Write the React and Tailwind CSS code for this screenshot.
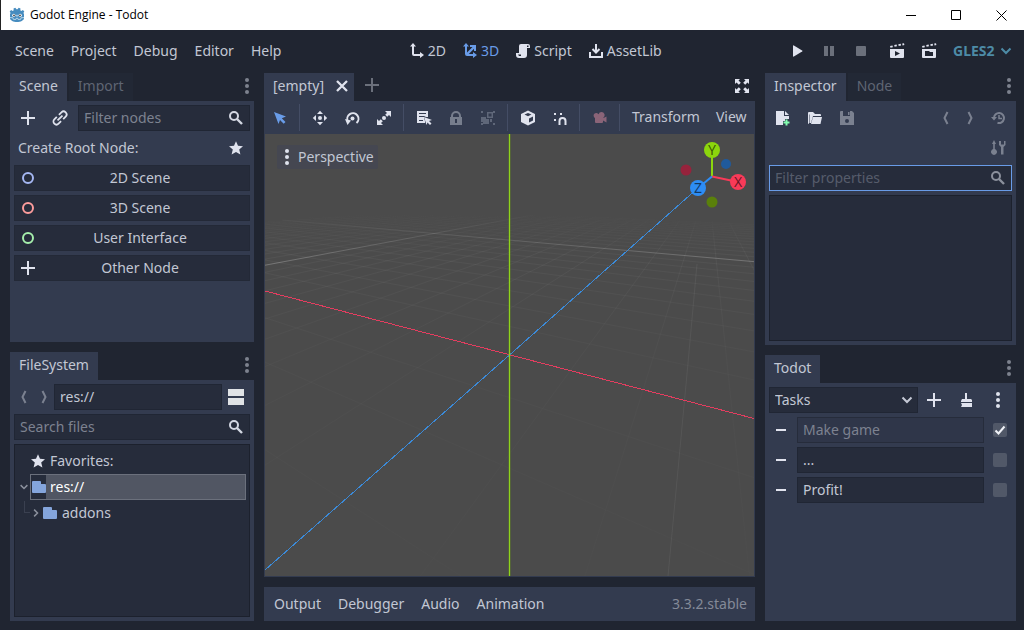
import React from "react";

const Icon = ({ children, className = "", size = 16 }) => (
  <svg
    width={size}
    height={size}
    viewBox="0 0 16 16"
    fill="currentColor"
    aria-hidden="true"
    className={`shrink-0 ${className}`}
  >
    {children}
  </svg>
);

const stroke = { fill: "none", stroke: "currentColor", strokeWidth: 2 };

const icons = {
  add: <path d="M7 1v6H1v2h6v6h2V9h6V7H9V1z" />,
  link: (
    <g {...stroke} strokeWidth="1.800" transform="rotate(-45 8 8)">
      <path d="M6.500 5H3a3 3 0 0 0 0 6h3.500M9.500 5H13a3 3 0 0 1 0 6H9.500" />
      <path d="M4.500 8h7" />
    </g>
  ),
  search: (
    <g {...stroke}>
      <circle cx="6" cy="6" r="4" />
      <path d="M9 9l5 5" strokeWidth="2.400" />
    </g>
  ),
  star: <path d="M8 1.200l2 4.600 5 .5-3.800 3.300 1.200 5L8 12l-4.400 2.600 1.200-5L1 6.300l5-.5z" />,
  ring: <circle cx="8" cy="8" r="5" {...stroke} />,
  dots: (
    <>
      <circle cx="8" cy="2" r="2" />
      <circle cx="8" cy="8" r="2" />
      <circle cx="8" cy="14" r="2" />
    </>
  ),
  back: <path d="M9.500 2L6.500 8l3 6" {...stroke} />,
  forward: <path d="M6.500 2l3 6-3 6" {...stroke} />,
  split: <path d="M0 0h16v7H0zM0 9h16v7H0z" />,
  folder: <path d="M2 2a1 1 0 0 0-1 1v10a1 1 0 0 0 1 1h12a1 1 0 0 0 1-1V6a1 1 0 0 0-1-1h-4V3a1 1 0 0 0-1-1z" />,
  down: <path d="M3.500 5.500L8 10l4.500-4.500" {...stroke} />,
  right: <path d="M5.500 3.500L10 8l-4.500 4.500" {...stroke} />,
  close: <path d="M3 3l10 10M13 3L3 13" {...stroke} strokeWidth="2.300" />,
  expand: (
    <path d="M1 1h5L4.500 2.500l2.300 2.300-2 2-2.300-2.300L1 6zM15 1v5l-1.500-1.500-2.300 2.300-2-2 2.300-2.300L10 1zM1 15v-5l1.500 1.500 2.300-2.300 2 2-2.300 2.300L6 15zM15 15h-5l1.500-1.500-2.300-2.300 2-2 2.300 2.300L15 10z" />
  ),
  mode2d: <path d="M4 0L1 3.500h2V11a2 2 0 0 0 2 2h6v2l4-3-4-3v2H5V3.500h2z" />,
  mode3d: (
    <path d="M4 0L1 3.500h2V11a2 2 0 0 0 2 2h6v2l4-3-4-3v2H6.800L12 5.700V8h2V2H8v2h2.500L5 9.500v-6h2z" />
  ),
  script: (
    <path d="M6 1a2 2 0 0 0-2 2v7H1v2a3 3 0 0 0 3 3h5a3 3 0 0 0 3-3V5h3V3a2 2 0 0 0-2-2zm6 2V2.500h1.500V4H12zM3 11.500h3V13H4z" fillRule="evenodd" />
  ),
  assetLib: <path d="M8 1v8M4.500 6L8 9.500 11.500 6M2 9v5h12V9" {...stroke} />,
  play: <path d="M4 3v10a.6.6 0 0 0 .9.500l8.200-4.900a.7.7 0 0 0 0-1.200L4.900 2.500A.6.6 0 0 0 4 3z" />,
  pause: <path d="M3 3h4v10H3zM9 3h4v10H9z" />,
  stop: <rect x="3" y="3" width="10" height="10" rx="1" />,
  playScene: (
    <path d="M1 3l2.500-.600.400 1.800-2.400.600zM5.200 2l2.400-.500.400 1.800-2.400.500zM9.300 1.200l2.400-.500.400 1.800-2.400.500zM13.200.500L15 .200l.400 1.800-1.800.400zM1 6h14v8a1 1 0 0 1-1 1H2a1 1 0 0 1-1-1zm5 2v5l5-2.500z" fillRule="evenodd" />
  ),
  playCustom: (
    <path d="M1 3l2.500-.600.400 1.800-2.400.600zM5.200 2l2.400-.500.400 1.800-2.400.500zM9.300 1.200l2.400-.500.400 1.800-2.400.500zM13.200.500L15 .200l.400 1.800-1.800.400zM1 6h14v8a1 1 0 0 1-1 1H2a1 1 0 0 1-1-1zm3 2v5h8V9H8.500V8z" fillRule="evenodd" />
  ),
  select: <path d="M2 2l12 4.500-4.200 1.800 3.700 3.700-1.800 1.800L8 10.100 6.500 14z" />,
  move: (
    <>
      <circle cx="8" cy="8" r="2" />
      <path d="M8 .800l3 3.200H5zM8 15.200l3-3.200H5zM.800 8L4 5v6zM15.200 8L12 5v6z" />
    </>
  ),
  rotate: (
    <>
      <circle cx="8.500" cy="8.500" r="2" />
      <path d="M4 11.500A5.600 5.600 0 1 1 12.500 13" {...stroke} />
      <path d="M1 9l6 1.500L3.500 15z" />
    </>
  ),
  scale: (
    <>
      <circle cx="8" cy="8" r="2" />
      <path d="M9 1h6v6l-2-2-1.800 1.800-2-2L11 3zM7 15H1V9l2 2 1.800-1.800 2 2L5 13z" />
    </>
  ),
  list: (
    <>
      <path d="M1 1h11v6h-2l-2-1v2l1 3v2H1zm2 2v1h7V3zm0 3v1h5V6zm0 4v1h4v-1z" fillRule="evenodd" />
      <path d="M8 7l8 3-3 1 2.500 2.500-1.500 1.500-2.500-2.500-1 2.500z" />
    </>
  ),
  lock: (
    <path d="M8 1a5 5 0 0 0-5 5v1H2v8h12V7h-1V6a5 5 0 0 0-5-5zm0 2a3 3 0 0 1 3 3v1H5V6a3 3 0 0 1 3-3zM7 9h2v4H7z" fillRule="evenodd" />
  ),
  group: (
    <path d="M1 1h2v2H1zM13 1h2v2h-2zM1 13h2v2H1zM13 13h2v2h-2zM7 2h6v6H7zm1.500 1.500v3h3v-3zM1 7h5v2h3v5H3V12H1zM10 9h2v3h-2z" fillRule="evenodd" />
  ),
  cube: (
    <path d="M8 .500l7 3.500v8l-7 3.500L1 12V4zM8 3L4.500 4.600 8 6.300l3.500-1.700zM9 8.500v4l4-2v-4z" fillRule="evenodd" />
  ),
  snap: (
    <>
      <path d="M2 3h2v2H2zM8 3h2v2H8zM2 9h2v2H2z" />
      <path d="M7.500 15v-4a3 3 0 0 1 6 0v4" {...stroke} />
    </>
  ),
  camera: (
    <path d="M9.500 2a3 3 0 0 0-2.900 2.200A2.700 2.700 0 1 0 3 8v4a1 1 0 0 0 1 1h6a1 1 0 0 0 1-1v-1.500l3.500 2v-6L11.500 8v-.700A3 3 0 0 0 9.500 2z" />
  ),
  newFile: (
    <>
      <path d="M1 1h8v5h5v3h-4v2H8v4H1zM10 1l4 4h-4z" />
      <path d="M10.500 9.500h2v2h2v2h-2v2h-2v-2h-2v-2h2z" fill="#84ffb1" />
    </>
  ),
  open: (
    <path d="M1 3a1 1 0 0 1 1-1h4l2 2h5a1 1 0 0 1 1 1v1H6L4 13H2.500V4.500H2V14a1 1 0 0 1-1-1zM6 7h9l-1.500 7H4z" />
  ),
  save: <path d="M2 1h11l2 2v12H1V2a1 1 0 0 1 1-1zm2 0v5h7V1zm5 1h1.500v3H9zM8 9a2 2 0 1 0 0 4 2 2 0 0 0 0-4z" fillRule="evenodd" />,
  history: (
    <g {...stroke}>
      <path d="M4 8a5 5 0 1 1 3.500 4.800" />
      <path d="M9 5v3.500h3" strokeWidth="1.500" />
      <path d="M1 7l3 3.500L7 7z" fill="currentColor" stroke="none" />
    </g>
  ),
  tools: (
    <path d="M4 0l2 4H4.800v5A3 3 0 1 1 3.200 9V4H2zM9 1v4l2 2v7.500h2.500V7l2-2V1H14v3.500h-3V1z" />
  ),
  brush: <path d="M7 1h2v6h4l1 1v2H3V9l1-2h3zM3 11h11v4H3l1-2z" />,
};

const Tool = ({ icon, label, className = "text-[#e0e3ee]" }) => (
  <button aria-label={label} className={`flex h-[26px] w-8 shrink-0 items-center justify-center ${className}`}>
    <Icon>{icons[icon]}</Icon>
  </button>
);

const Separator = () => <span className="mr-1 ml-[3px] h-[27px] w-px shrink-0 bg-[#444d65]" />;

const fieldStyle = "h-[26px] min-w-0 w-full border border-[#202634] bg-[#262c3b] px-[5px] outline-none";

const SearchField = ({ label, fade, focused }) => (
  <label className="relative block flex-1">
    <input
      type="text"
      aria-label={label}
      placeholder={label}
      className={
        focused
          ? "h-[26px] w-full border border-[#699ce8] bg-[#262c3b] px-[5px] pb-0.5 outline-none placeholder:text-[#565c6b]"
          : `${fieldStyle} pb-0.5 placeholder:text-[#7d8290]`
      }
    />
    <Icon className={`absolute top-[5px] right-[6px] ${fade ? "text-[#8b909c]" : "text-[#d3d7e2]"}`}>{icons.search}</Icon>
  </label>
);

const Tabs = ({ active, other }) => (
  <div className="flex h-7 items-stretch gap-0.5">
    <button className="bg-[#333b4f] px-[9px] pb-0.5">{active}</button>
    {other && <button className="bg-[#222835] px-[9px] pb-0.5 text-[#5f6573]">{other}</button>}
    <button aria-label={`${active} dock options`} className="ml-auto flex w-[14px] items-center justify-center pb-0.5 text-[#7d828e]">
      <Icon>{icons.dots}</Icon>
    </button>
  </div>
);

const SceneDock = () => {
  const roots = [
    { name: "2D Scene", icon: "ring", color: "text-[#a5b7f3]" },
    { name: "3D Scene", icon: "ring", color: "text-[#fc9c9c]" },
    { name: "User Interface", icon: "ring", color: "text-[#a5efac]" },
    { name: "Other Node", icon: "add", color: "text-[#e0e3ee]" },
  ];

  return (
    <section className="flex min-h-0 flex-col">
      <Tabs active="Scene" other="Import" />
      <div className="flex flex-1 flex-col gap-1 bg-[#333b4f] p-1">
        <div className="flex items-center">
          <div className="-ml-0.5 flex pr-0.5">
            <Tool icon="add" label="Add node" />
            <Tool icon="link" label="Instance scene" />
          </div>
          <SearchField label="Filter nodes" />
        </div>
        <div className="flex h-[26px] items-center justify-between pl-1">
          <span>Create Root Node:</span>
          <button aria-label="Favorite nodes" className="mr-[6px] text-[#e0e3ee]">
            <Icon>{icons.star}</Icon>
          </button>
        </div>
        {roots.map((root) => (
          <button key={root.name} className="relative h-[26px] border border-[#232937] bg-[#262c3b] pl-4">
            <Icon className={`absolute top-1 left-[5px] ${root.color}`}>{icons[root.icon]}</Icon>
            {root.name}
          </button>
        ))}
      </div>
    </section>
  );
};

const FileSystemDock = () => (
  <section className="flex min-h-0 flex-col">
    <Tabs active="FileSystem" />
    <div className="flex flex-1 flex-col gap-1 bg-[#333b4f] p-1">
      <div className="flex items-center">
        <button aria-label="Back" className="flex w-5 shrink-0 justify-center text-[#7b8190]"><Icon>{icons.back}</Icon></button>
        <button aria-label="Forward" className="flex w-5 shrink-0 justify-center text-[#7b8190]"><Icon>{icons.forward}</Icon></button>
        <input aria-label="Path" defaultValue="res://" className={`${fieldStyle} pb-0.5`} />
        <button aria-label="Toggle split mode" className="mx-[6px] text-[#e0e3e6]"><Icon>{icons.split}</Icon></button>
      </div>
      <div className="flex"><SearchField label="Search files" /></div>
      <ul className="flex-1 border border-[#1c212d] bg-[#262c3b] px-[3px] pt-[3px]">
        <li className="flex h-[26px] items-center gap-1 pl-3">
          <Icon className="text-[#e0e3ee]">{icons.star}</Icon>Favorites:
        </li>
        <li className="flex h-[26px] items-center">
          <Icon size={12} className="text-[#8b909c]">{icons.down}</Icon>
          <span className="flex h-[26px] flex-1 items-center border border-[#6b707c] bg-[#515663] text-white">
            <span className="flex h-6 w-[15px] items-center justify-center bg-[#262c3b] text-[#84a5dc]"><Icon>{icons.folder}</Icon></span>
            <span className="pl-1">res://</span>
          </span>
        </li>
        <li className="flex h-[26px] items-center pl-[6px]">
          <span className="mb-3 h-3 w-[6px] border-b border-l border-[#3a4050]" />
          <Icon size={12} className="text-[#8b909c]">{icons.right}</Icon>
          <Icon className="text-[#84a5dc]">{icons.folder}</Icon>
          <span className="pl-1">addons</span>
        </li>
      </ul>
    </div>
  </section>
);

// Ground plane seen in perspective: origin and the two vanishing points
const ORIGIN = [244.5, 221];
const VANISH_X = [-415, 48];
const VANISH_Z = [443, 48];
const STEP_X = 0.0842;
const STEP_Z = 0.152;

const project = (x, z) => {
  const a = x * STEP_X;
  const b = z * STEP_Z;
  const w = 1 + a + b;
  return [0, 1].map((i) => ((ORIGIN[i] + a * VANISH_X[i] + b * VANISH_Z[i]) / w).toFixed(1));
};

const gridLine = (x1, z1, x2, z2) => `M${project(x1, z1).join(" ")}L${project(x2, z2).join(" ")}`;

const Grid = () => {
  let minor = "";
  for (let i = -4; i < 24; i++) {
    if (i === 0 || i === 10) continue;
    // stop short of the camera plane, where the projection blows up
    minor += gridLine(i, Math.max(-20, (-0.9 - i * STEP_X) / STEP_Z), i, 24);
    minor += gridLine(Math.max(-20, (-0.9 - i * STEP_Z) / STEP_X), i, 24, i);
  }
  const major = gridLine(10, -8, 10, 24) + gridLine(-20, 10, 24, 10);

  return (
    <svg viewBox="0 0 489 442" preserveAspectRatio="xMidYMid slice" className="absolute inset-0 h-full w-full" fill="none">
      <defs>
        <linearGradient id="fade" gradientUnits="userSpaceOnUse" x1="0" y1="78" x2="0" y2="442">
          <stop offset="0" stopColor="#fff" stopOpacity="0" />
          <stop offset="0.120" stopColor="#fff" stopOpacity="0.040" />
          <stop offset="0.400" stopColor="#fff" stopOpacity="0.020" />
          <stop offset="1" stopColor="#fff" stopOpacity="0.008" />
        </linearGradient>
        <linearGradient id="fadeMajor" gradientUnits="userSpaceOnUse" x1="0" y1="80" x2="0" y2="130">
          <stop offset="0" stopColor="#fff" stopOpacity="0" />
          <stop offset="1" stopColor="#fff" stopOpacity="0.240" />
        </linearGradient>
      </defs>
      <path d={minor} stroke="url(#fade)" />
      <path d={major} stroke="url(#fadeMajor)" />
      <path d="M432 130L422 240 403 442" stroke="#fff" strokeOpacity="0.060" />
      <g shapeRendering="crispEdges">
        <path d="M0 157L489 284.500" stroke="#e33d5f" />
        <path d="M0 436L244.500 221 433 54" stroke="#3b8ad8" />
      </g>
      <rect x="243" y="0" width="3" height="442" fill="#6fb000" fillOpacity="0.250" />
      <rect x="244" y="0" width="1" height="442" fill="#8fd41c" />
    </svg>
  );
};

const Gizmo = () => (
  <svg width="66" height="70" viewBox="680 140 66 70" className="absolute top-[6px] right-2">
    <circle cx="686" cy="170" r="5.500" fill="#96233c" />
    <circle cx="726" cy="164" r="5" fill="#205a9c" />
    <circle cx="712" cy="202" r="5.500" fill="#5a800b" />
    <g strokeWidth="2">
      <path d="M712 176.500V150" stroke="#8cd60d" />
      <path d="M712 176.500L738 182" stroke="#f93a58" />
      <path d="M712 176.500L698 188" stroke="#2d8df5" />
    </g>
    <circle cx="712" cy="150" r="8" fill="#8cd60d" />
    <circle cx="738" cy="182" r="8" fill="#f93a58" />
    <circle cx="698" cy="188" r="8" fill="#2d8df5" />
    <g fontSize="14" textAnchor="middle" fill="#000" fillOpacity="0.600">
      <text x="712" y="155">Y</text>
      <text x="738" y="187">X</text>
      <text x="698" y="193">Z</text>
    </g>
  </svg>
);

const Viewport = () => (
  <main className="flex min-w-0 flex-col">
    <div className="flex h-7 items-stretch">
      <div className="flex items-center gap-[10px] bg-[#333b4f] pr-1 pl-[9px]">
        <button className="pb-0.5">[empty]</button>
        <button aria-label="Close tab" className="pb-0.5 text-[#e0e3ee]"><Icon>{icons.close}</Icon></button>
      </div>
      <button aria-label="Add scene" className="ml-[10px] pb-1 text-[#6b707b]"><Icon>{icons.add}</Icon></button>
      <button aria-label="Distraction free mode" className="mr-[5px] ml-auto pb-0.5 text-[#e0e3ee]"><Icon>{icons.expand}</Icon></button>
    </div>
    <div className="flex h-[33px] items-center overflow-hidden bg-[#333b4f]">
      <Tool icon="select" label="Select" className="text-[#699ce8]" />
      <Separator />
      <Tool icon="move" label="Move" />
      <Tool icon="rotate" label="Rotate" />
      <Tool icon="scale" label="Scale" />
      <Separator />
      <Tool icon="list" label="List select" />
      <Tool icon="lock" label="Lock" className="text-[#777e8d]" />
      <Tool icon="group" label="Group" className="text-[#5f6779]" />
      <Separator />
      <Tool icon="cube" label="Local space" />
      <Tool icon="snap" label="Snap" />
      <Separator />
      <Tool icon="camera" label="Override camera" className="text-[#8a6478]" />
      <Separator />
      <button className="px-2 pb-0.5">Transform</button>
      <button className="px-2 pb-0.5">View</button>
    </div>
    <div className="relative flex-1 overflow-hidden border border-t-0 border-[#333b4f] bg-[#4b4b4b]">
      <Grid />
      <button className="absolute top-[11px] left-3 flex h-6 items-center gap-[3px] rounded-xs bg-[#454751] pr-1 pl-[2px]">
        <Icon className="text-[#e0e3ee]">{icons.dots}</Icon>Perspective
      </button>
      <Gizmo />
    </div>
    <footer className="mt-[10px] flex h-[34px] items-center gap-[17px] bg-[#333b4f] pr-2 pl-[10px]">
      <button>Output</button>
      <button>Debugger</button>
      <button>Audio</button>
      <button>Animation</button>
      <span className="ml-auto text-[#848a98]">3.3.2.stable</span>
    </footer>
  </main>
);

const Inspector = () => (
  <section className="flex min-h-0 flex-col">
    <Tabs active="Inspector" other="Node" />
    <div className="flex flex-1 flex-col gap-1 bg-[#333b4f] p-1">
      <div className="-mx-0.5 flex items-center">
        <Tool icon="newFile" label="New resource" />
        <Tool icon="open" label="Load resource" />
        <Tool icon="save" label="Save resource" className="text-[#7b8190]" />
        <div className="ml-auto flex text-[#7b8190]">
          <button aria-label="Previous object" className="flex w-6 items-center justify-center"><Icon>{icons.back}</Icon></button>
          <button aria-label="Next object" className="flex w-6 items-center justify-center"><Icon>{icons.forward}</Icon></button>
          <Tool icon="history" label="History" className="text-[#7b8190]" />
        </div>
      </div>
      <div className="-mx-0.5 flex justify-end">
        <Tool icon="tools" label="Object properties" className="text-[#7b8190]" />
      </div>
      <div className="flex"><SearchField label="Filter properties" fade focused /></div>
      <div className="flex-1 border border-[#1c212d] bg-[#262c3b]" />
    </div>
  </section>
);

const Todot = () => {
  const tasks = [
    { id: 1, name: "Make game", done: true },
    { id: 2, name: "...", done: false },
    { id: 3, name: "Profit!", done: false },
  ];

  return (
    <section className="flex min-h-0 flex-col">
      <Tabs active="Todot" />
      <div className="flex flex-1 flex-col gap-1 bg-[#333b4f] p-1">
        <div className="-mr-0.5 flex items-center">
          <div className="relative flex-1">
            <select aria-label="List" className={`${fieldStyle} appearance-none`}>
              <option>Tasks</option>
            </select>
            <Icon className="pointer-events-none absolute top-[5px] right-[3px] text-[#c5c9d5]">{icons.down}</Icon>
          </div>
          <Tool icon="add" label="Add task" />
          <Tool icon="brush" label="Clear done" />
          <Tool icon="dots" label="More" />
        </div>
        {tasks.map((task) => (
          <div key={task.id} className="flex items-center">
            <button aria-label={`Remove ${task.name}`} className="flex h-[26px] w-7 shrink-0 items-center pl-[7px]">
              <span className="h-0.5 w-[10px] bg-[#e0e3ee]" />
            </button>
            <input
              aria-label={`Task ${task.id}`}
              defaultValue={task.name}
              className={
                task.done
                  ? "h-[26px] w-full min-w-0 border border-[#262c3b] bg-[#2f3649] px-[5px] pb-0.5 text-[#7d8290] outline-none"
                  : `${fieldStyle} pb-0.5`
              }
            />
            <span className="relative mr-[5px] ml-[9px] h-[14px] w-[14px] shrink-0">
              <input
                type="checkbox"
                aria-label={`${task.name} done`}
                defaultChecked={task.done}
                className="peer block h-[14px] w-[14px] appearance-none rounded-xs bg-[#515868]"
              />
              <svg viewBox="0 0 14 14" className="pointer-events-none absolute inset-0 hidden peer-checked:block" fill="none">
                <path d="M2.500 7.500l3 3 6-7" stroke="#f0f2f8" strokeWidth="2" />
              </svg>
            </span>
          </div>
        ))}
      </div>
    </section>
  );
};

const TitleBar = () => (
  <header className="flex h-[30px] items-center border-l border-[#222222] bg-white pl-2 text-black">
    <svg width="16" height="16" viewBox="0 0 16 16" aria-hidden="true">
      <path
        d="M6.300.800l1.200 1.500h1L9.700.800l1.800.700-.200 1.800 1 .700 1.600-.900 1.400 1.400-.900 1.600.600 1V11c0 2.500-3.500 4-7 4s-7-1.500-7-4V7.100l.600-1L.700 4.500l1.400-1.400 1.600.900 1-.700-.200-1.800z"
        fill="#478cbf"
      />
      <path d="M1 10.500l3 .300.300 1.500 2.500.200.300-1.200h1.800l.300 1.200 2.500-.200.300-1.500 3-.300" fill="none" stroke="#cfe3f0" strokeWidth=".8" />
      <circle cx="4.800" cy="8.300" r="1.600" fill="#fff" />
      <circle cx="11.200" cy="8.300" r="1.600" fill="#fff" />
      <circle cx="5" cy="8.400" r=".9" fill="#414042" />
      <circle cx="11" cy="8.400" r=".9" fill="#414042" />
      <path d="M8 7.800v1.800" stroke="#fff" />
    </svg>
    <h1 className="ml-[5px] font-['Open_Sans',sans-serif] text-[12px]">Godot Engine - Todot</h1>
    <div className="ml-auto flex">
      <button aria-label="Minimize" className="flex h-[30px] w-[45px] items-center justify-center">
        <svg width="11" height="11" stroke="#000"><path d="M0 5.500h10" /></svg>
      </button>
      <button aria-label="Maximize" className="flex h-[30px] w-[45px] items-center justify-center">
        <svg width="11" height="11" stroke="#000" fill="none"><path d="M.5.500h9v9h-9z" /></svg>
      </button>
      <button aria-label="Close" className="flex h-[30px] w-[45px] items-center justify-center">
        <svg width="11" height="11" stroke="#000"><path d="M.5.500l10 10M10.500.500l-10 10" /></svg>
      </button>
    </div>
  </header>
);

const MenuBar = () => {
  const menus = ["Scene", "Project", "Debug", "Editor", "Help"];
  const modes = [
    { name: "2D", icon: "mode2d" },
    { name: "3D", icon: "mode3d", active: true },
    { name: "Script", icon: "script" },
    { name: "AssetLib", icon: "assetLib" },
  ];

  return (
    <nav className="flex h-[42px] items-center justify-between pr-[10px] pl-[15px]">
      <div className="flex gap-[17px]">
        {menus.map((menu) => (<button key={menu}>{menu}</button>))}
      </div>
      <div className="flex gap-4">
        {modes.map((mode) => (
          <button key={mode.name} className={`flex items-center gap-[3px] ${mode.active ? "text-[#699ce8]" : ""}`}>
            <Icon className={mode.active ? "" : "text-[#e0e3ee]"}>{icons[mode.icon]}</Icon>
            {mode.name}
          </button>
        ))}
      </div>
      <div className="flex items-center gap-4 text-[#e0e3ee]">
        <button aria-label="Play"><Icon>{icons.play}</Icon></button>
        <button aria-label="Pause" className="text-[#6b707b]"><Icon>{icons.pause}</Icon></button>
        <button aria-label="Stop" className="text-[#6b707b]"><Icon>{icons.stop}</Icon></button>
        <button aria-label="Play scene" className="ml-1"><Icon>{icons.playScene}</Icon></button>
        <button aria-label="Play custom scene"><Icon>{icons.playCustom}</Icon></button>
        <div className="relative text-[#4d8ba6]">
          <select aria-label="Renderer" className="w-[61px] appearance-none font-bold outline-none">
            <option>GLES2</option>
          </select>
          <Icon className="pointer-events-none absolute top-0.5 right-0">{icons.down}</Icon>
        </div>
      </div>
    </nav>
  );
};

export default function App() {
  return (
    <div className="flex min-h-screen flex-col bg-[#202531] font-['Noto_Sans',sans-serif] text-[14px] leading-5 text-[#c2c7d4]">
      <TitleBar />
      <MenuBar />
      <div className="grid flex-1 grid-cols-[244px_minmax(0,1fr)_251px] gap-[10px] pt-px pr-2 pb-[9px] pl-[10px]">
        <div className="grid grid-rows-2 gap-[10px]">
          <SceneDock />
          <FileSystemDock />
        </div>
        <Viewport />
        <div className="grid grid-rows-[272fr_266fr] gap-[10px]">
          <Inspector />
          <Todot />
        </div>
      </div>
    </div>
  );
}
